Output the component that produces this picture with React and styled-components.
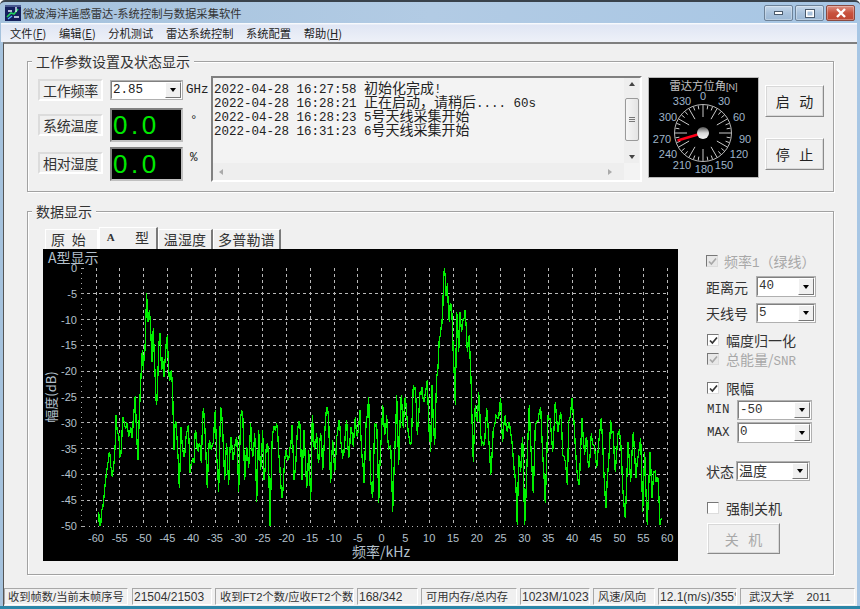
import React from "react";
import styled, { createGlobalStyle } from "styled-components";

const CJK = '"Noto Sans CJK SC", "Liberation Sans", sans-serif';
const SANSCJK = '"Liberation Sans", "Noto Sans CJK SC", sans-serif';
const MONOCJK = '"Liberation Mono", "Noto Sans CJK SC", monospace';

const Global = createGlobalStyle`
  html, body { margin: 0; padding: 0; background: #fff; }
  * { box-sizing: border-box; }
`;

const Win = styled.div`
  width: 860px; height: 609px; overflow: hidden;
  display: flex; flex-direction: column;
  background: linear-gradient(90deg, #a5c2dd, #b2cbe4 50%, #a7c6e4);
  border-top: 2px solid #39424b;
  border-bottom: 3px solid #2b86a8;
  border-radius: 5px 5px 0 0;
  font-family: ${CJK}; color: #222;
`;
const TitleBar = styled.div`
  height: 21px; flex: none; display: flex; align-items: center;
  padding: 0 5px 0 5px; gap: 2px;
`;
const TitleText = styled.div`font-size: 11.3px; color: #333; margin-right: auto; line-height: 16px;`;
const CapBtn = styled.div`
  width: 29px; height: 16px; margin-top: 1px; border: 1px solid ${p => p.$close ? "#8a4a40" : "#6d8298"}; border-radius: 2px;
  display: flex; align-items: center; justify-content: center;
  background: ${p => p.$close
    ? "linear-gradient(180deg,#dc8f80,#c8523e 50%,#bf4632)"
    : "linear-gradient(180deg,#c6d8ea,#a9c2dc 50%,#9cb8d5)"};
  box-shadow: inset 0 0 0 1px rgba(255,255,255,.3);
`;
const MenuBar = styled.div`
  height: 19px; flex: none; display: flex; align-items: center; margin: 0 3px 0 1px;
  background: linear-gradient(180deg, #fdfeff 0, #e0e6f4 12%, #eef1f8);
  font-size: 11.25px; padding-left: 9px; color: #222;
`;
const MenuItem = styled.span`margin-right: 12.6px; white-space: nowrap; u { text-decoration: underline; }`;
const Client = styled.div`
  flex: 1; min-height: 0; margin: 0 3px 0 3px; display: flex; flex-direction: column;
  background: #f0f0f0; border-top: 2px solid #7f7f7f; border-left: 1px solid #555;
  padding: 8px 0 1px;
`;
const Group = styled.fieldset`
  margin: ${p => p.$mt || 0}px 23px 0; padding: 0; min-width: 0; height: ${p => p.$h}px;
  border: 1px solid #a2a2a2; box-shadow: inset 1px 1px 0 #fff, 1px 1px 0 #fff;
`;
const Legend = styled.legend`
  margin-left: 4px; padding: 0 4px; height: 18px; line-height: 18px;
  font-size: 14px; background: #f0f0f0; color: #333;
`;
const ParamRow = styled.div`display: flex; padding: 6px 0 0 10px; align-items: flex-start;`;
const ParamGrid = styled.div`
  display: grid; margin-top: 4px; width: 173px;
  grid-template-columns: 65px 73px auto; column-gap: 7px;
  grid-template-rows: 20px 42px 39px;
  align-items: end;
`;
const ParamLabel = styled.div`
  height: 22px; margin-bottom: ${p => p.$mb}px; display: flex; align-items: center; justify-content: center;
  font-size: 14px; letter-spacing: -.2px; color: #333;
  border: 2px solid; border-color: #dcdcdc #fff #fff #dcdcdc; background: #f0f0f0;
`;
const Combo = styled.div`
  width: ${p => p.$w}px; height: ${p => p.$h || 20}px; flex: none; display: flex;
  border: 2px solid; border-color: #808080 #fff #fff #808080;
  outline: 1px solid #b0b0b0; outline-offset: -1px;
  background: #fff; font-family: ${MONOCJK}; font-size: 12.5px;
`;
const ComboText = styled.div`flex: 1; padding-left: 1px; line-height: 16px;`;
const ComboArrow = styled.div`
  width: 16px; margin: 0; display: flex; align-items: center; justify-content: center;
  background: #f0f0f0; border: 1px solid; border-color: #fff #777 #777 #fff;
  &::after { content: ""; border: 3.5px solid transparent; border-top: 4px solid #000; border-bottom: 0; }
`;
const Led = styled.div`
  width: 73px; height: 34px; background: #000; color: #00e800;
  border: 2px solid; border-color: #808080 #c0c0c0 #c0c0c0 #808080;
  font-family: "Liberation Sans", sans-serif; font-size: 26px; line-height: 30px;
  letter-spacing: 3.5px; padding-left: 1px;
`;
const Unit = styled.div`
  font-family: ${MONOCJK}; font-size: 12.5px; line-height: 14px;
  margin-left: ${p => p.$ml || 0}px; margin-bottom: ${p => p.$mb || 0}px;
`;
const Log = styled.div`
  width: 431px; height: 106px; flex: none; position: relative;
  display: grid; grid-template-columns: 1fr 16px; grid-template-rows: 1fr 17px;
  border: 2px solid; border-color: #808080 #fff #fff #808080;
  background: #f3f3f3;
`;
const LogText = styled.div`
  padding: 2px 0 0 1px; font-family: "Liberation Mono", monospace; font-size: 12.5px;
  white-space: pre;
`;
const LogLine = styled.div`height: 14px; line-height: 14px;`;
const Han = styled.span`font-family: ${CJK}; font-size: 14px; line-height: 14px;`;
const VScroll = styled.div`
  display: flex; flex-direction: column; align-items: center; justify-content: space-between;
  background: #eeeeee; padding: 4px 0; position: relative; margin-right: 1px;
`;
const Thumb = styled.div`
  width: 14px; height: 43px; margin-top: -3px; background: linear-gradient(90deg,#f6f6f6,#e4e4e4);
  border: 1px solid #9a9a9a; border-radius: 2px;
  display: flex; flex-direction: column; gap: 1px; align-items: center; justify-content: center;
  i { display: block; width: 6px; height: 1px; background: #777; }
`;
const HScroll = styled.div`
  display: flex; align-items: center; justify-content: space-between; background: #eeeeee; padding: 0 12px 0 6px;
`;
const Corner = styled.div`background: #f3f3f3;`;
const Tri = styled.div`
  width: 0; height: 0; border: 3.5px solid transparent;
  ${p => p.$d === "up" && "border-bottom: 4px solid #444; border-top: 0;"}
  ${p => p.$d === "down" && "border-top: 4px solid #444; border-bottom: 0;"}
  ${p => p.$d === "left" && "border-right: 4px solid #aaa; border-left: 0;"}
  ${p => p.$d === "right" && "border-left: 4px solid #aaa; border-right: 0;"}
`;
const GaugeBox = styled.svg`
  width: 111px; height: 101px; margin: 1px 0 0 6px; flex: none; display: block; background: #000;
  outline: 1px solid #b8b8b8; outline-offset: -1px;
`;
const BtnCol = styled.div`display: flex; flex-direction: column; gap: 21px; margin: 9px 0 0 6px;`;
const Btn = styled.div`
  width: ${p => p.$w}px; height: ${p => p.$h}px; display: flex; align-items: center; justify-content: center;
  font-size: 14px; white-space: pre; color: ${p => p.$off ? "#a8a8a8" : "#222"};
  background: #f0f0f0; border: 2px solid; border-color: #fff #8a8a8a #8a8a8a #fff;
  outline: 1px solid #d8d8d8; outline-offset: -2px;
`;
const DataRow = styled.div`display: flex; padding: 7px 0 0 15px; align-items: flex-start;`;
const LeftCol = styled.div`width: 635px; flex: none;`;
const Tabs = styled.div`display: flex; height: 22px; padding-left: 2px; align-items: flex-end;`;
const Tab = styled.div`
  width: ${p => p.$w}px; height: ${p => p.$active ? 22 : 20}px; flex: none;
  display: flex; align-items: center; justify-content: center; white-space: pre;
  padding: 0 ${p => p.$pr || 0}px ${p => p.$active ? 3 : 2}px 0;
  font-size: 14px; color: #333; background: #f0f0f0; letter-spacing: .2px;
  border-top: 1px solid #fff; border-left: 1px solid #fff;
  border-right: 2px solid ${p => p.$plain ? "#fff" : "#7a7a7a"};
`;
const TabA = styled.span`font-family: "Liberation Serif", serif; font-weight: 700; font-size: 11px;`;
const Chart = styled.svg`display: block; width: 635px; height: 312px; background: #000;`;
const Controls = styled.div`display: flex; flex-direction: column; margin: 24px 0 0 28px; width: 115px;`;
const CRow = styled.div`
  display: flex; align-items: center; height: ${p => p.$h || 20}px; margin-top: ${p => p.$mt || 0}px;
  padding-left: ${p => p.$pl || 0}px; font-size: 14px; color: ${p => p.$off ? "#a8a8a8" : "#333"};
  white-space: nowrap;
`;
const CLabel = styled.span`
  width: ${p => p.$w}px; flex: none;
  font-family: ${p => p.$mono ? '"Liberation Mono", monospace' : "inherit"};
  font-size: ${p => p.$mono ? "12.5px" : "inherit"};
`;
const Box = styled.span`
  width: 12px; height: 12px; flex: none; margin-right: ${p => p.$mr}px; display: flex; align-items: center; justify-content: center;
  border: 1px solid; border-color: #777 #ddd #ddd #777;
  background: ${p => p.$off ? "#e8e8e8" : "#fff"};
`;
const SmallMono = styled.span`font-family: "Liberation Mono", monospace; font-size: 12.5px;`;
const Status = styled.div`
  margin-top: auto; height: 17px; flex: none; display: flex; gap: 3px; font-family: ${SANSCJK}; font-size: 11.25px; color: #333;
`;
const Pane = styled.div`
  width: ${p => p.$w}px; flex: none; overflow: hidden; white-space: pre; padding: 1px 0 0 ${p => p.$pl ?? 1}px; line-height: 15px;
  margin-left: ${p => p.$ml || 0}px; font-size: ${p => p.$num ? "12px" : "inherit"};
  border: 1px solid; border-color: #a8a8a8 #fff #fff #a8a8a8;
`;

const z9 = [55,730,58,765,62,765,68,715,72,680,78,620,82,590,88,545,92,590,97,620,103,570,108,435,114,490,118,520,122,560,128,440,134,465,140,455,146,500,152,470,156,505,160,445,166,378,170,500,174,570,180,385,184,300,187,240,190,300,195,240,200,70,204,155,208,120,212,180,216,275,220,175,226,330,230,405,236,230,240,190,245,300,248,260,252,320,258,230,262,200,268,330,274,300,278,370,282,540,286,455,290,490,294,560,298,655,303,470,308,540,312,560,318,500,325,465,330,610,336,575,342,580,346,480,352,540,358,520,364,580,370,415,376,500,382,655,388,510,394,540,400,520,406,420,410,560,416,665,422,410,428,480,434,630,440,520,446,645,452,500,458,570,464,530,470,500,476,665,482,440,488,430,494,630,500,530,506,595,512,460,518,560,524,490,530,695,536,480,542,600,548,480,552,630,558,540,564,530,570,768,576,520,582,470,590,460,596,550,602,640,606,685,612,600,618,540,624,570,630,535,636,465,642,630,648,570,654,470,660,465,666,630,672,480,680,655,686,540,692,690,697,435,703,540,710,490,716,580,722,490,728,600,734,490,740,410,746,450,752,640,758,510,764,605,770,500,776,450,782,510,788,560,794,520,800,450,806,565,812,470,820,530,826,440,832,500,840,420,846,560,852,640,858,460,866,380,872,630,878,685,884,460,890,460,896,700];
const z10 = [32,580,38,450,44,540,50,480,56,580,62,570,68,770,74,590,80,420,86,630,94,420,100,520,106,425,112,500,118,550,124,565,130,390,136,400,142,540,150,410,156,395,162,440,172,375,178,540,182,590,186,390,194,570,200,360,205,320,208,250,213,220,218,170,223,40,228,120,232,85,238,200,241,145,246,180,250,300,256,450,260,170,266,290,270,170,275,230,280,190,285,165,292,290,298,240,302,350,305,460,310,620,316,450,322,500,326,410,332,540,338,560,344,560,350,460,356,550,362,660,370,520,378,480,386,490,392,430,398,560,406,480,412,530,418,500,426,560,432,640,438,700,442,810,446,600,452,650,458,545,464,810,470,650,478,450,484,600,490,715,496,510,504,500,512,455,518,600,526,745,534,480,540,490,548,590,556,440,564,530,572,470,578,600,586,620,592,690,596,500,606,430,612,500,620,640,628,690,636,490,644,600,650,545,656,640,664,535,672,570,680,640,694,490,702,660,708,760,716,620,722,495,730,530,736,650,744,535,752,560,758,700,766,790,774,560,782,680,790,530,798,670,806,590,812,550,818,770,824,590,832,810,840,590,846,730,852,650,858,680,864,670,870,810,876,790];
const toPts = (a, ox, oy) => {
  const out = [];
  for (let i = 0; i < a.length; i += 2) out.push([ox + a[i] / 3, oy + a[i + 1] / 3]);
  return out;
};
const wobble = i => {
  const s = Math.sin(i * 12.9898) * 43758.5453;
  return (s - Math.floor(s)) * 2 - 1;
};
const basePts = [...toPts(z9, 80, 270), ...toPts(z10, 370, 255)];
const trace = basePts.flatMap((p, i) => {
  const n = basePts[i + 1];
  if (!n) return [p];
  const my = (p[1] + n[1]) / 2 + wobble(i) * 7;
  const lo = Math.min(p[1], n[1]) - 3, hi = Math.max(p[1], n[1]) + 4;
  return [p, [(p[0] + n[0]) / 2, Math.min(526, Math.max(lo, Math.min(hi, my)))]];
}).map(p => `${p[0].toFixed(1)},${p[1].toFixed(1)}`).join(" ");

const X0 = 96, XS = 23.8, Y0 = 268, YS = 25.8;
const AXIS = "#b4c0cc";
const range = n => Array.from({ length: n }, (_, i) => i);

function ChartSvg() {
  return (
    <Chart viewBox="43 249 635 312">
      {range(25).map(i => (
        <line key={i} x1={X0 + i * XS} x2={X0 + i * XS} y1={Y0} y2={Y0 + 10 * YS} stroke="#b8b8b8" strokeDasharray="3 3" shapeRendering="crispEdges" />
      ))}
      {range(9).map(i => (
        <line key={i} x1={81} x2={X0 + 24 * XS} y1={Y0 + (i + 1) * YS} y2={Y0 + (i + 1) * YS} stroke="#b8b8b8" strokeDasharray="3 3" shapeRendering="crispEdges" />
      ))}
      <line x1={84} x2={X0 + 24 * XS} y1={Y0 + 10 * YS} y2={Y0 + 10 * YS} stroke="#b0b0b0" strokeDasharray="1 3.76" shapeRendering="crispEdges" />
      {range(51).map(i => (
        <line key={i} x1={81} x2={i % 5 === 0 ? 84 : 82} y1={Y0 + i * 5.16} y2={Y0 + i * 5.16} stroke="#a8a8a8" shapeRendering="crispEdges" />
      ))}
      <polyline points={trace} fill="none" stroke="#00f000" strokeWidth="1.3" shapeRendering="crispEdges" />
      <g fontFamily="Liberation Sans, sans-serif" fontSize="11" fill={AXIS}>
        {range(11).map(i => (
          <text key={i} x={77} y={Y0 + i * YS + 4} textAnchor="end">{i === 0 ? "0" : -5 * i}</text>
        ))}
        {range(25).map(i => (
          <text key={i} x={X0 + i * XS} y={542} textAnchor="middle">{-60 + 5 * i}</text>
        ))}
      </g>
      <text x={48} y={263} fontFamily={CJK} fontSize="14" fill={AXIS}>A型显示</text>
      <text x={381} y={557} textAnchor="middle" fontFamily={CJK} fontSize="14" fill={AXIS}>频率/kHz</text>
      <text transform="translate(56 397) rotate(-90)" textAnchor="middle" fontFamily={CJK} fontSize="13" fill={AXIS}>幅度(dB)</text>
    </Chart>
  );
}

const GCX = 55, GCY = 56;
const gaugeLabels = [
  [0, 55, 23], [30, 76, 28], [60, 91, 44], [90, 97, 66], [120, 91, 81], [150, 76, 92],
  [180, 56, 96], [210, 34, 92], [240, 20, 81], [270, 14, 66], [300, 20, 44], [330, 34, 28],
];
function Gauge() {
  const ticks = range(36).map(i => {
    const a = (i * 10 * Math.PI) / 180;
    const inner = i % 3 === 0 ? 16 : 24;
    return (
      <line key={i} x1={GCX + Math.sin(a) * inner} y1={GCY - Math.cos(a) * inner} x2={GCX + Math.sin(a) * 28} y2={GCY - Math.cos(a) * 28} stroke="#c8c8c8" strokeWidth="1" />
    );
  });
  return (
    <GaugeBox viewBox="0 0 111 101">
      <defs>
        <linearGradient id="hub" x1="0" y1="0" x2="0" y2="1">
          <stop offset="0" stopColor="#555" />
          <stop offset="0.5" stopColor="#d8d8d8" />
          <stop offset="1" stopColor="#f4f4f4" />
        </linearGradient>
      </defs>
      <text x={55.5} y={13} textAnchor="middle" fontFamily={CJK} fontSize="11.3" fill="#c0c0c0">雷达方位角<tspan fontSize="9" fontFamily="Liberation Sans">[N]</tspan></text>
      <circle cx={GCX} cy={GCY} r={28.5} fill="none" stroke="#b8b8b8" strokeWidth="1" />
      {ticks}
      <line x1={GCX} y1={GCY} x2={29.5} y2={GCY + 7.5} stroke="#ff0018" strokeWidth="2.4" />
      <circle cx={GCX} cy={GCY} r={6} fill="url(#hub)" />
      <g fontFamily="Liberation Sans, sans-serif" fontSize="11" fill="#9fb4c8" textAnchor="middle">
        {gaugeLabels.map(([t, x, y]) => <text key={t} x={x} y={y}>{t}</text>)}
      </g>
    </GaugeBox>
  );
}

const Check = () => (
  <svg width="9" height="9" viewBox="0 0 9 9"><path d="M1 4.5 L3.4 7 L8 1.5" fill="none" stroke="currentColor" strokeWidth="1.7" /></svg>
);
const AppIcon = () => (
  <svg width="16" height="16" viewBox="0 0 16 16">
    <rect width="16" height="16" fill="#14205c" />
    <rect x="0" y="0" width="16" height="2" fill="#4a5a90" />
    <path d="M2 12 L6 8 L9 9 L13 4" stroke="#21d05a" strokeWidth="1.6" fill="none" />
    <path d="M3 6 L7 6 M9 12 L14 12 M11 2 L11 7" stroke="#e8f0ff" strokeWidth="1.4" fill="none" />
    <path d="M3 14 L7 11" stroke="#5ab0ff" strokeWidth="1.4" />
  </svg>
);
const ComboBox = ({ w, h, children }) => (
  <Combo $w={w} $h={h}><ComboText>{children}</ComboText><ComboArrow /></Combo>
);

export default function App() {
  return (
    <>
      <Global />
      <Win>
        <TitleBar>
          <AppIcon />
          <TitleText>微波海洋遥感雷达-系统控制与数据采集软件</TitleText>
          <CapBtn>
            <svg width="11" height="6" viewBox="0 0 11 6"><rect x="1.5" y="1.5" width="8" height="3" fill="#fff" stroke="#4a5a6c" /></svg>
          </CapBtn>
          <CapBtn>
            <svg width="10" height="9" viewBox="0 0 10 9"><rect x="1.5" y="1.5" width="7" height="6" fill="none" stroke="#fff" strokeWidth="2" /><rect x=".5" y=".5" width="9" height="8" fill="none" stroke="#4a5a6c" /></svg>
          </CapBtn>
          <CapBtn $close>
            <svg width="12" height="10" viewBox="0 0 12 10"><path d="M2 1 L10 9 M10 1 L2 9" stroke="#fff" strokeWidth="2.4" /></svg>
          </CapBtn>
        </TitleBar>
        <MenuBar>
          <MenuItem>文件(<u>F</u>)</MenuItem>
          <MenuItem>编辑(<u>E</u>)</MenuItem>
          <MenuItem>分机测试</MenuItem>
          <MenuItem>雷达系统控制</MenuItem>
          <MenuItem>系统配置</MenuItem>
          <MenuItem>帮助(<u>H</u>)</MenuItem>
        </MenuBar>
        <Client>
          <Group $h={140}>
            <Legend>工作参数设置及状态显示</Legend>
            <ParamRow>
              <ParamGrid>
                <ParamLabel $mb={-1}>工作频率</ParamLabel>
                <ComboBox w={73}>2.85</ComboBox>
                <Unit $ml={-4} $mb={3}>GHz</Unit>
                <ParamLabel $mb={6}>系统温度</ParamLabel>
                <Led>0.0</Led>
                <Unit $mb={14}>°</Unit>
                <ParamLabel $mb={7}>相对湿度</ParamLabel>
                <Led>0.0</Led>
                <Unit $mb={16}>%</Unit>
              </ParamGrid>
              <Log>
                <LogText>
                  <LogLine>2022-04-28 16:27:58 <Han>初始化完成</Han>!</LogLine>
                  <LogLine>2022-04-28 16:28:21 <Han>{"正在启动\uFF0C请稍后"}</Han>.... 60s</LogLine>
                  <LogLine>2022-04-28 16:28:23 5<Han>号天线采集开始</Han></LogLine>
                  <LogLine>2022-04-28 16:31:23 6<Han>号天线采集开始</Han></LogLine>
                </LogText>
                <VScroll>
                  <Tri $d="up" />
                  <Thumb><i /><i /><i /></Thumb>
                  <Tri $d="down" />
                </VScroll>
                <HScroll>
                  <Tri $d="left" />
                  <Tri $d="right" />
                </HScroll>
                <Corner />
              </Log>
              <Gauge />
              <BtnCol>
                <Btn $w={59} $h={32}>启   动</Btn>
                <Btn $w={59} $h={32}>停   止</Btn>
              </BtnCol>
            </ParamRow>
          </Group>
          <Group $mt={10} $h={373}>
            <Legend>数据显示</Legend>
            <DataRow>
              <LeftCol>
                <Tabs>
                  <Tab $w={54} $plain $pr={6}>原  始</Tab>
                  <Tab $w={59} $active><TabA>A</TabA>      型</Tab>
                  <Tab $w={55}>温湿度</Tab>
                  <Tab $w={68}>多普勒谱</Tab>
                </Tabs>
                <ChartSvg />
              </LeftCol>
              <Controls>
                <CRow $off>
                  <Box $off $mr={6}><Check /></Box>
                  <span>频率<SmallMono>1</SmallMono>{"\uFF08绿线\uFF09"}</span>
                </CRow>
                <CRow $mt={5} $h={21}>
                  <CLabel $w={50}>距离元</CLabel>
                  <ComboBox w={60} h={21}>40</ComboBox>
                </CRow>
                <CRow $mt={6}>
                  <CLabel $w={50}>天线号</CLabel>
                  <ComboBox w={60}>5</ComboBox>
                </CRow>
                <CRow $mt={8} $h={18} $pl={1}>
                  <Box $mr={7}><Check /></Box>
                  <span>幅度归一化</span>
                </CRow>
                <CRow $mt={1} $h={18} $off $pl={1}>
                  <Box $off $mr={7}><Check /></Box>
                  <span>总能量/<SmallMono>SNR</SmallMono></span>
                </CRow>
                <CRow $mt={11} $h={18} $pl={1}>
                  <Box $mr={7}><Check /></Box>
                  <span>限幅</span>
                </CRow>
                <CRow $mt={3} $pl={1}>
                  <CLabel $w={30} $mono>MIN</CLabel>
                  <ComboBox w={75}>-50</ComboBox>
                </CRow>
                <CRow $mt={2} $h={21} $pl={1}>
                  <CLabel $w={30} $mono>MAX</CLabel>
                  <ComboBox w={75} h={21}>0</ComboBox>
                </CRow>
                <CRow $mt={18}>
                  <CLabel $w={30}>状态</CLabel>
                  <ComboBox w={74}><Han>温度</Han></ComboBox>
                </CRow>
                <CRow $mt={18} $h={18} $pl={1}>
                  <Box $mr={7} />
                  <span>强制关机</span>
                </CRow>
                <CRow $mt={6} $h={31} $pl={1}>
                  <Btn $w={73} $h={31} $off>关   机</Btn>
                </CRow>
              </Controls>
            </DataRow>
          </Group>
          <Status>
            <Pane $w={124} $pl={3}>收到帧数/当前末帧序号</Pane>
            <Pane $w={80} $ml={1} $num>21504/21503</Pane>
            <Pane $w={139} $pl={4}>收到FT2个数/应收FT2个数</Pane>
            <Pane $w={61} $num>168/342</Pane>
            <Pane $w={96} $pl={4}>可用内存/总内存</Pane>
            <Pane $w={70} $num>1023M/1023</Pane>
            <Pane $w={62} $pl={4}>风速/风向</Pane>
            <Pane $w={79} $num>12.1(m/s)/355°</Pane>
            <Pane $w={115} $pl={8}>武汉大学    2011</Pane>
          </Status>
        </Client>
      </Win>
    </>
  );
}
